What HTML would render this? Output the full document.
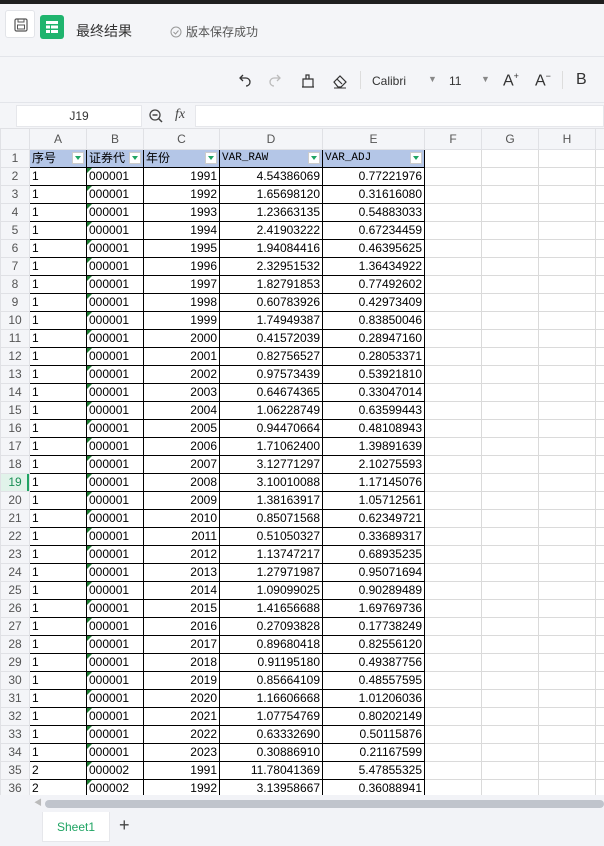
<!DOCTYPE html>
<html><head><meta charset="utf-8"><style>
*{margin:0;padding:0;box-sizing:border-box}
body{width:604px;height:846px;overflow:hidden;background:#f2f3f7;font-family:"Liberation Sans","Noto Sans CJK SC",sans-serif;position:relative}
.top{position:absolute;left:0;top:0;width:604px;height:4px;background:#1f1f1f}
.hdr{position:absolute;left:0;top:4px;width:604px;height:53px;background:#f4f5f8;border-bottom:1px solid #e3e5ea}
.save{position:absolute;left:5px;top:10px;width:30px;height:28px;background:#fff;border:1px solid #e2e4e8;border-radius:3px}
.logo{position:absolute;left:40px;top:15px;width:24px;height:24px;background:#1fb46e;border-radius:3px}
.title{position:absolute;left:76px;top:21px;font-size:14px;color:#333}
.saved{position:absolute;left:170px;top:23px;font-size:12px;color:#555}
.tb{position:absolute;left:0;top:57px;width:604px;height:46px;background:#f4f5f8;border-bottom:1px solid #e3e5ea;font-size:12px;color:#333}
.fb{position:absolute;left:0;top:103px;width:604px;height:25px;background:#f4f5f8}
.nb{position:absolute;left:16px;top:105px;width:126px;height:22px;background:#fff;border:1px solid #e6e7eb;text-align:center;font-size:12px;line-height:21px;color:#333}
.fx{position:absolute;left:195px;top:105px;width:409px;height:22px;background:#fff;border:1px solid #e6e7eb}
table{position:absolute;left:0;top:128px;width:615px;border-collapse:collapse;table-layout:fixed;background:#fff;font-size:12px}
td{height:18px;border:1px solid #dadada;padding:0 2px;white-space:nowrap;overflow:hidden;line-height:17px;color:#000}
tr.ch td{height:21px;background:#f4f5f8;text-align:center;color:#555;border-color:#e0e1e5}
td.rn{background:#f4f5f8;text-align:center;color:#555;border-color:#e0e1e5;padding:0}
td.d{border:1px solid #000}
td.r{text-align:right}
td.h{background:#b4c6e7;position:relative}
td.h i{position:absolute;right:2px;top:2px;width:12px;height:12px;background:#fff;border:1px solid #ccc}
td.h i:after{content:"";position:absolute;left:2px;top:3px;border-left:3px solid transparent;border-right:3px solid transparent;border-top:4px solid #1fa463}
td.b{position:relative}
td.b:before{content:"";position:absolute;left:0;top:0;border-top:5px solid #1e7d32;border-right:5px solid transparent}
.sb{position:absolute;left:0;top:795px;width:604px;height:17px;background:#f2f3f7}
.thumb{position:absolute;left:45px;top:800px;width:559px;height:8px;background:#c0c4cc;border-radius:4px}
.tab{position:absolute;left:42px;top:812px;width:68px;height:30px;background:#fff;border:1px solid #e6e7eb;border-top:none;color:#1fa463;font-size:12px;text-align:center;line-height:30px}
</style></head><body>
<div class="top"></div>
<div class="hdr"></div>
<div class="save"><svg width="30" height="28"><rect x="9" y="8" width="12" height="12" rx="1.5" fill="none" stroke="#555" stroke-width="1.2"/><rect x="12" y="8" width="6" height="3" fill="none" stroke="#555"/><rect x="11.5" y="14" width="7" height="4" fill="none" stroke="#555"/></svg></div>
<div class="logo"><svg width="24" height="24"><rect x="6" y="6" width="12" height="3" fill="#fff"/><rect x="6" y="10.5" width="4" height="3" fill="#fff"/><rect x="11" y="10.5" width="7" height="3" fill="#fff"/><rect x="6" y="15" width="4" height="3" fill="#fff"/><rect x="11" y="15" width="7" height="3" fill="#fff"/></svg></div>
<div class="title">最终结果</div>
<div class="saved"><svg width="12" height="12" style="vertical-align:-2px;margin-right:4px"><circle cx="6" cy="6" r="5" fill="none" stroke="#999"/><path d="M3.5 6l2 2 3-3.5" fill="none" stroke="#999"/></svg>版本保存成功</div>
<div class="tb">
<svg style="position:absolute;left:236px;top:16px" width="16" height="16"><path d="M4 5h6a4 4 0 0 1 0 8" fill="none" stroke="#333" stroke-width="1.3"/><path d="M7 2L4 5l3 3" fill="none" stroke="#333" stroke-width="1.3"/></svg>
<svg style="position:absolute;left:268px;top:16px" width="16" height="16"><path d="M12 5H6a4 4 0 0 0 0 8" fill="none" stroke="#bbb" stroke-width="1.3"/><path d="M9 2l3 3-3 3" fill="none" stroke="#bbb" stroke-width="1.3"/></svg>
<svg style="position:absolute;left:300px;top:16px" width="16" height="16"><path d="M2 14h12M3 14V6h10v8M6 6V2h3v4" fill="none" stroke="#333" stroke-width="1.2"/></svg>
<svg style="position:absolute;left:332px;top:16px" width="16" height="16"><path d="M2 9l6-6 6 6-5 5H6z M5 6l5 5" fill="none" stroke="#333" stroke-width="1.2"/><path d="M2 15h12" stroke="#333"/></svg>
<div style="position:absolute;left:360px;top:14px;width:1px;height:18px;background:#ddd"></div>
<span style="position:absolute;left:372px;top:17px">Calibri</span>
<span style="position:absolute;left:428px;top:17px;color:#888;font-size:9px">▼</span>
<span style="position:absolute;left:449px;top:17px">11</span>
<span style="position:absolute;left:481px;top:17px;color:#888;font-size:9px">▼</span>
<span style="position:absolute;left:503px;top:14px;font-size:16px">A<sup style="font-size:9px">+</sup></span>
<span style="position:absolute;left:535px;top:14px;font-size:16px">A<sup style="font-size:9px">−</sup></span>
<div style="position:absolute;left:562px;top:14px;width:1px;height:18px;background:#ddd"></div>
<span style="position:absolute;left:576px;top:14px;font-size:16px">B</span>
</div>
<div class="fb"></div>
<div class="nb">J19</div>
<svg style="position:absolute;left:148px;top:108px" width="16" height="16"><circle cx="7" cy="7" r="5" fill="none" stroke="#444" stroke-width="1.3"/><path d="M4.5 7h5M10.5 10.5l3.5 3.5" stroke="#444" stroke-width="1.5"/></svg>
<span style="position:absolute;left:175px;top:107px;font-family:'Liberation Serif',serif;font-style:italic;font-size:14px;color:#444">fx</span>
<div class="fx"></div>
<table>
<colgroup><col style="width:29px"><col style="width:57px"><col style="width:57px"><col style="width:76px"><col style="width:103px"><col style="width:102px"><col style="width:57px"><col style="width:57px"><col style="width:57px"><col style="width:20px"></colgroup>
<tr class="ch"><td></td><td>A</td><td>B</td><td>C</td><td>D</td><td>E</td><td>F</td><td>G</td><td>H</td><td></td></tr>
<tr><td class="rn">1</td><td class="d h">序号<i></i></td><td class="d h">证券代<i></i></td><td class="d h">年份<i></i></td><td class="d h" style="font-family:'Liberation Mono',monospace;font-size:11px">VAR_RAW<i></i></td><td class="d h" style="font-family:'Liberation Mono',monospace;font-size:11px">VAR_ADJ<i></i></td><td></td><td></td><td></td><td></td></tr>
<tr><td class="rn">2</td><td class="d">1</td><td class="d b">000001</td><td class="d r">1991</td><td class="d r">4.54386069</td><td class="d r">0.77221976</td><td></td><td></td><td></td><td></td></tr>
<tr><td class="rn">3</td><td class="d">1</td><td class="d b">000001</td><td class="d r">1992</td><td class="d r">1.65698120</td><td class="d r">0.31616080</td><td></td><td></td><td></td><td></td></tr>
<tr><td class="rn">4</td><td class="d">1</td><td class="d b">000001</td><td class="d r">1993</td><td class="d r">1.23663135</td><td class="d r">0.54883033</td><td></td><td></td><td></td><td></td></tr>
<tr><td class="rn">5</td><td class="d">1</td><td class="d b">000001</td><td class="d r">1994</td><td class="d r">2.41903222</td><td class="d r">0.67234459</td><td></td><td></td><td></td><td></td></tr>
<tr><td class="rn">6</td><td class="d">1</td><td class="d b">000001</td><td class="d r">1995</td><td class="d r">1.94084416</td><td class="d r">0.46395625</td><td></td><td></td><td></td><td></td></tr>
<tr><td class="rn">7</td><td class="d">1</td><td class="d b">000001</td><td class="d r">1996</td><td class="d r">2.32951532</td><td class="d r">1.36434922</td><td></td><td></td><td></td><td></td></tr>
<tr><td class="rn">8</td><td class="d">1</td><td class="d b">000001</td><td class="d r">1997</td><td class="d r">1.82791853</td><td class="d r">0.77492602</td><td></td><td></td><td></td><td></td></tr>
<tr><td class="rn">9</td><td class="d">1</td><td class="d b">000001</td><td class="d r">1998</td><td class="d r">0.60783926</td><td class="d r">0.42973409</td><td></td><td></td><td></td><td></td></tr>
<tr><td class="rn">10</td><td class="d">1</td><td class="d b">000001</td><td class="d r">1999</td><td class="d r">1.74949387</td><td class="d r">0.83850046</td><td></td><td></td><td></td><td></td></tr>
<tr><td class="rn">11</td><td class="d">1</td><td class="d b">000001</td><td class="d r">2000</td><td class="d r">0.41572039</td><td class="d r">0.28947160</td><td></td><td></td><td></td><td></td></tr>
<tr><td class="rn">12</td><td class="d">1</td><td class="d b">000001</td><td class="d r">2001</td><td class="d r">0.82756527</td><td class="d r">0.28053371</td><td></td><td></td><td></td><td></td></tr>
<tr><td class="rn">13</td><td class="d">1</td><td class="d b">000001</td><td class="d r">2002</td><td class="d r">0.97573439</td><td class="d r">0.53921810</td><td></td><td></td><td></td><td></td></tr>
<tr><td class="rn">14</td><td class="d">1</td><td class="d b">000001</td><td class="d r">2003</td><td class="d r">0.64674365</td><td class="d r">0.33047014</td><td></td><td></td><td></td><td></td></tr>
<tr><td class="rn">15</td><td class="d">1</td><td class="d b">000001</td><td class="d r">2004</td><td class="d r">1.06228749</td><td class="d r">0.63599443</td><td></td><td></td><td></td><td></td></tr>
<tr><td class="rn">16</td><td class="d">1</td><td class="d b">000001</td><td class="d r">2005</td><td class="d r">0.94470664</td><td class="d r">0.48108943</td><td></td><td></td><td></td><td></td></tr>
<tr><td class="rn">17</td><td class="d">1</td><td class="d b">000001</td><td class="d r">2006</td><td class="d r">1.71062400</td><td class="d r">1.39891639</td><td></td><td></td><td></td><td></td></tr>
<tr><td class="rn">18</td><td class="d">1</td><td class="d b">000001</td><td class="d r">2007</td><td class="d r">3.12771297</td><td class="d r">2.10275593</td><td></td><td></td><td></td><td></td></tr>
<tr><td class="rn" style="background:#e1f3ea;color:#1a8f55;box-shadow:inset -2px 0 0 #1fa463">19</td><td class="d">1</td><td class="d b">000001</td><td class="d r">2008</td><td class="d r">3.10010088</td><td class="d r">1.17145076</td><td></td><td></td><td></td><td></td></tr>
<tr><td class="rn">20</td><td class="d">1</td><td class="d b">000001</td><td class="d r">2009</td><td class="d r">1.38163917</td><td class="d r">1.05712561</td><td></td><td></td><td></td><td></td></tr>
<tr><td class="rn">21</td><td class="d">1</td><td class="d b">000001</td><td class="d r">2010</td><td class="d r">0.85071568</td><td class="d r">0.62349721</td><td></td><td></td><td></td><td></td></tr>
<tr><td class="rn">22</td><td class="d">1</td><td class="d b">000001</td><td class="d r">2011</td><td class="d r">0.51050327</td><td class="d r">0.33689317</td><td></td><td></td><td></td><td></td></tr>
<tr><td class="rn">23</td><td class="d">1</td><td class="d b">000001</td><td class="d r">2012</td><td class="d r">1.13747217</td><td class="d r">0.68935235</td><td></td><td></td><td></td><td></td></tr>
<tr><td class="rn">24</td><td class="d">1</td><td class="d b">000001</td><td class="d r">2013</td><td class="d r">1.27971987</td><td class="d r">0.95071694</td><td></td><td></td><td></td><td></td></tr>
<tr><td class="rn">25</td><td class="d">1</td><td class="d b">000001</td><td class="d r">2014</td><td class="d r">1.09099025</td><td class="d r">0.90289489</td><td></td><td></td><td></td><td></td></tr>
<tr><td class="rn">26</td><td class="d">1</td><td class="d b">000001</td><td class="d r">2015</td><td class="d r">1.41656688</td><td class="d r">1.69769736</td><td></td><td></td><td></td><td></td></tr>
<tr><td class="rn">27</td><td class="d">1</td><td class="d b">000001</td><td class="d r">2016</td><td class="d r">0.27093828</td><td class="d r">0.17738249</td><td></td><td></td><td></td><td></td></tr>
<tr><td class="rn">28</td><td class="d">1</td><td class="d b">000001</td><td class="d r">2017</td><td class="d r">0.89680418</td><td class="d r">0.82556120</td><td></td><td></td><td></td><td></td></tr>
<tr><td class="rn">29</td><td class="d">1</td><td class="d b">000001</td><td class="d r">2018</td><td class="d r">0.91195180</td><td class="d r">0.49387756</td><td></td><td></td><td></td><td></td></tr>
<tr><td class="rn">30</td><td class="d">1</td><td class="d b">000001</td><td class="d r">2019</td><td class="d r">0.85664109</td><td class="d r">0.48557595</td><td></td><td></td><td></td><td></td></tr>
<tr><td class="rn">31</td><td class="d">1</td><td class="d b">000001</td><td class="d r">2020</td><td class="d r">1.16606668</td><td class="d r">1.01206036</td><td></td><td></td><td></td><td></td></tr>
<tr><td class="rn">32</td><td class="d">1</td><td class="d b">000001</td><td class="d r">2021</td><td class="d r">1.07754769</td><td class="d r">0.80202149</td><td></td><td></td><td></td><td></td></tr>
<tr><td class="rn">33</td><td class="d">1</td><td class="d b">000001</td><td class="d r">2022</td><td class="d r">0.63332690</td><td class="d r">0.50115876</td><td></td><td></td><td></td><td></td></tr>
<tr><td class="rn">34</td><td class="d">1</td><td class="d b">000001</td><td class="d r">2023</td><td class="d r">0.30886910</td><td class="d r">0.21167599</td><td></td><td></td><td></td><td></td></tr>
<tr><td class="rn">35</td><td class="d">2</td><td class="d b">000002</td><td class="d r">1991</td><td class="d r">11.78041369</td><td class="d r">5.47855325</td><td></td><td></td><td></td><td></td></tr>
<tr><td class="rn">36</td><td class="d">2</td><td class="d b">000002</td><td class="d r">1992</td><td class="d r">3.13958667</td><td class="d r">0.36088941</td><td></td><td></td><td></td><td></td></tr>
</table>
<div class="sb"></div>
<div class="thumb"></div>
<span style="position:absolute;left:34px;top:797px;font-size:8px;color:#bbb">◀</span>
<div class="tab">Sheet1</div>
<span style="position:absolute;left:119px;top:815px;font-size:18px;color:#444">+</span>
</body></html>
